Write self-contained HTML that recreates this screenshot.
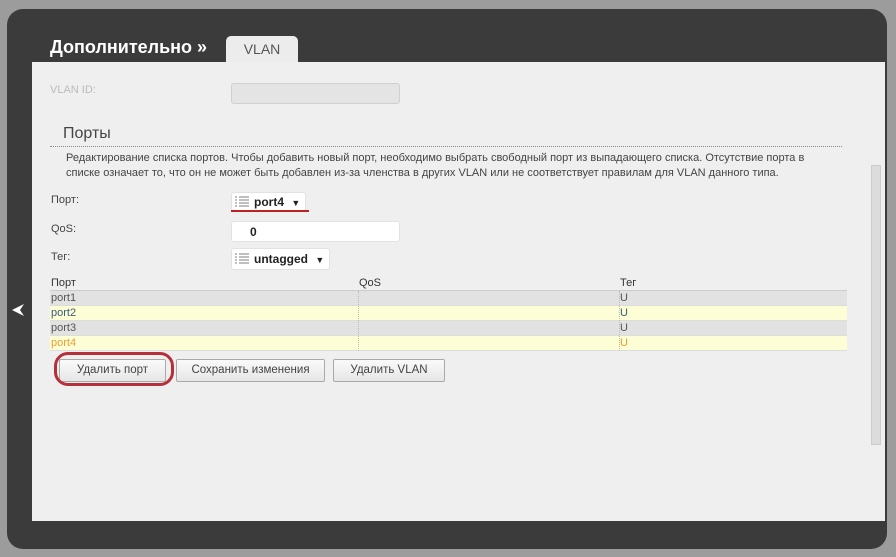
<!DOCTYPE html>
<html><head><meta charset="utf-8"><style>
*{margin:0;padding:0;box-sizing:border-box}
body{width:896px;height:557px;background:#9c9c9c;font-family:"Liberation Sans",sans-serif;position:relative;overflow:hidden}
.dark{position:absolute;left:7px;top:9px;width:880px;height:540px;background:#3b3b3b;border-radius:16px}
.title{position:absolute;left:50px;top:37px;color:#fff;font-weight:bold;font-size:18px}
.tab{position:absolute;left:226px;top:36px;width:72px;height:28px;background:#ececec;border-radius:5px 5px 0 0;color:#555;font-size:14px;text-align:center;line-height:26px}
.content{position:absolute;left:32px;top:62px;width:853px;height:459px;background:#efefef}
.abs{position:absolute}
.lbl{font-size:11px;color:#444}
.inp{background:#fff;border-radius:3px;border:1px solid #e2e2e2}
.row{position:absolute;left:50px;width:797px;height:15px;font-size:11px;line-height:14px;border-bottom:1px solid #ddd}
.btn{position:absolute;top:359px;height:23px;background:linear-gradient(#fafafa,#e6e6e6);border:1px solid #aaa;border-radius:2px;font-size:11.5px;color:#444;text-align:center;line-height:21px}
.sel{font-weight:bold;font-size:12px;color:#222}
</style></head><body>
<div class="dark"></div>
<div class="title">Дополнительно »</div>
<div class="tab">VLAN</div>
<div class="content"></div>
<svg class="abs" style="left:10px;top:302px" width="16" height="16" viewBox="0 0 16 16"><path d="M14 2 L2 8 L14 14 L10 8 Z" fill="#fff"/></svg>
<div class="abs lbl" style="left:50px;top:84px;color:#bbb">VLAN ID:</div>
<div class="abs" style="left:231px;top:83px;width:169px;height:21px;background:#e4e4e4;border:1px solid #d0d0d0;border-radius:3px"></div>
<div class="abs" style="left:63px;top:125px;font-size:16px;color:#444">Порты</div>
<div class="abs" style="left:50px;top:146px;width:792px;border-top:1px dotted #888"></div>
<div class="abs" style="left:66px;top:151px;font-size:11px;color:#444;line-height:15px;width:790px">Редактирование списка портов. Чтобы добавить новый порт, необходимо выбрать свободный порт из выпадающего списка. Отсутствие порта в<br>списке означает то, что он не может быть добавлен из-за членства в других VLAN или не соответствует правилам для VLAN данного типа.</div>
<div class="abs lbl" style="left:51px;top:194px">Порт:</div>
<div class="abs lbl" style="left:51px;top:223px">QoS:</div>
<div class="abs lbl" style="left:51px;top:251px">Тег:</div>
<div class="abs inp sel" style="left:231px;top:192px;width:75px;height:19px;line-height:18px;padding-left:22px">port4 <span style="font-size:9px;margin-left:4px">▼</span></div>
<svg class="abs" style="left:235px;top:196px" width="14" height="11"><path d="M0 1h2M0 4h2M0 7h2M0 10h2M4 1h10M4 4h10M4 7h10M4 10h10" stroke="#999" stroke-width="1.2"/></svg>
<div class="abs" style="left:231px;top:210px;width:78px;height:2px;background:#b22"></div>
<div class="abs inp sel" style="left:231px;top:221px;width:169px;height:21px;line-height:20px;padding-left:18px">0</div>
<div class="abs inp sel" style="left:231px;top:248px;width:99px;height:22px;line-height:21px;padding-left:22px">untagged <span style="font-size:9px;margin-left:4px">▼</span></div>
<svg class="abs" style="left:235px;top:253px" width="14" height="11"><path d="M0 1h2M0 4h2M0 7h2M0 10h2M4 1h10M4 4h10M4 7h10M4 10h10" stroke="#999" stroke-width="1.2"/></svg>
<div class="row" style="top:276px;color:#333;border-bottom:1px solid #ccc"><span class="abs" style="left:1px">Порт</span><span class="abs" style="left:309px">QoS</span><span class="abs" style="left:570px">Тег</span></div>
<div class="row" style="top:291px;background:#e2e2e2;color:#555"><span class="abs" style="left:1px">port1</span><span class="abs" style="left:570px">U</span></div>
<div class="row" style="top:306px;background:#fefed6;color:#3a5a7a"><span class="abs" style="left:1px">port2</span><span class="abs" style="left:570px">U</span></div>
<div class="row" style="top:321px;background:#e2e2e2;color:#555"><span class="abs" style="left:1px">port3</span><span class="abs" style="left:570px">U</span></div>
<div class="row" style="top:336px;background:#fefed6;color:#e8a030"><span class="abs" style="left:1px">port4</span><span class="abs" style="left:570px">U</span></div>
<div class="abs" style="left:358px;top:291px;height:60px;border-left:1px dotted #bbb"></div>
<div class="abs" style="left:619px;top:291px;height:60px;border-left:1px dotted #bbb"></div>
<div class="btn" style="left:59px;width:107px">Удалить порт</div>
<div class="btn" style="left:176px;width:149px">Сохранить изменения</div>
<div class="btn" style="left:333px;width:112px">Удалить VLAN</div>
<div class="abs" style="left:54px;top:352px;width:120px;height:34px;border:3px solid #b5303a;border-radius:14px"></div>
<div class="abs" style="left:871px;top:165px;width:10px;height:280px;background:#dcdcdc;border:1px solid #ccc"></div>
</body></html>
